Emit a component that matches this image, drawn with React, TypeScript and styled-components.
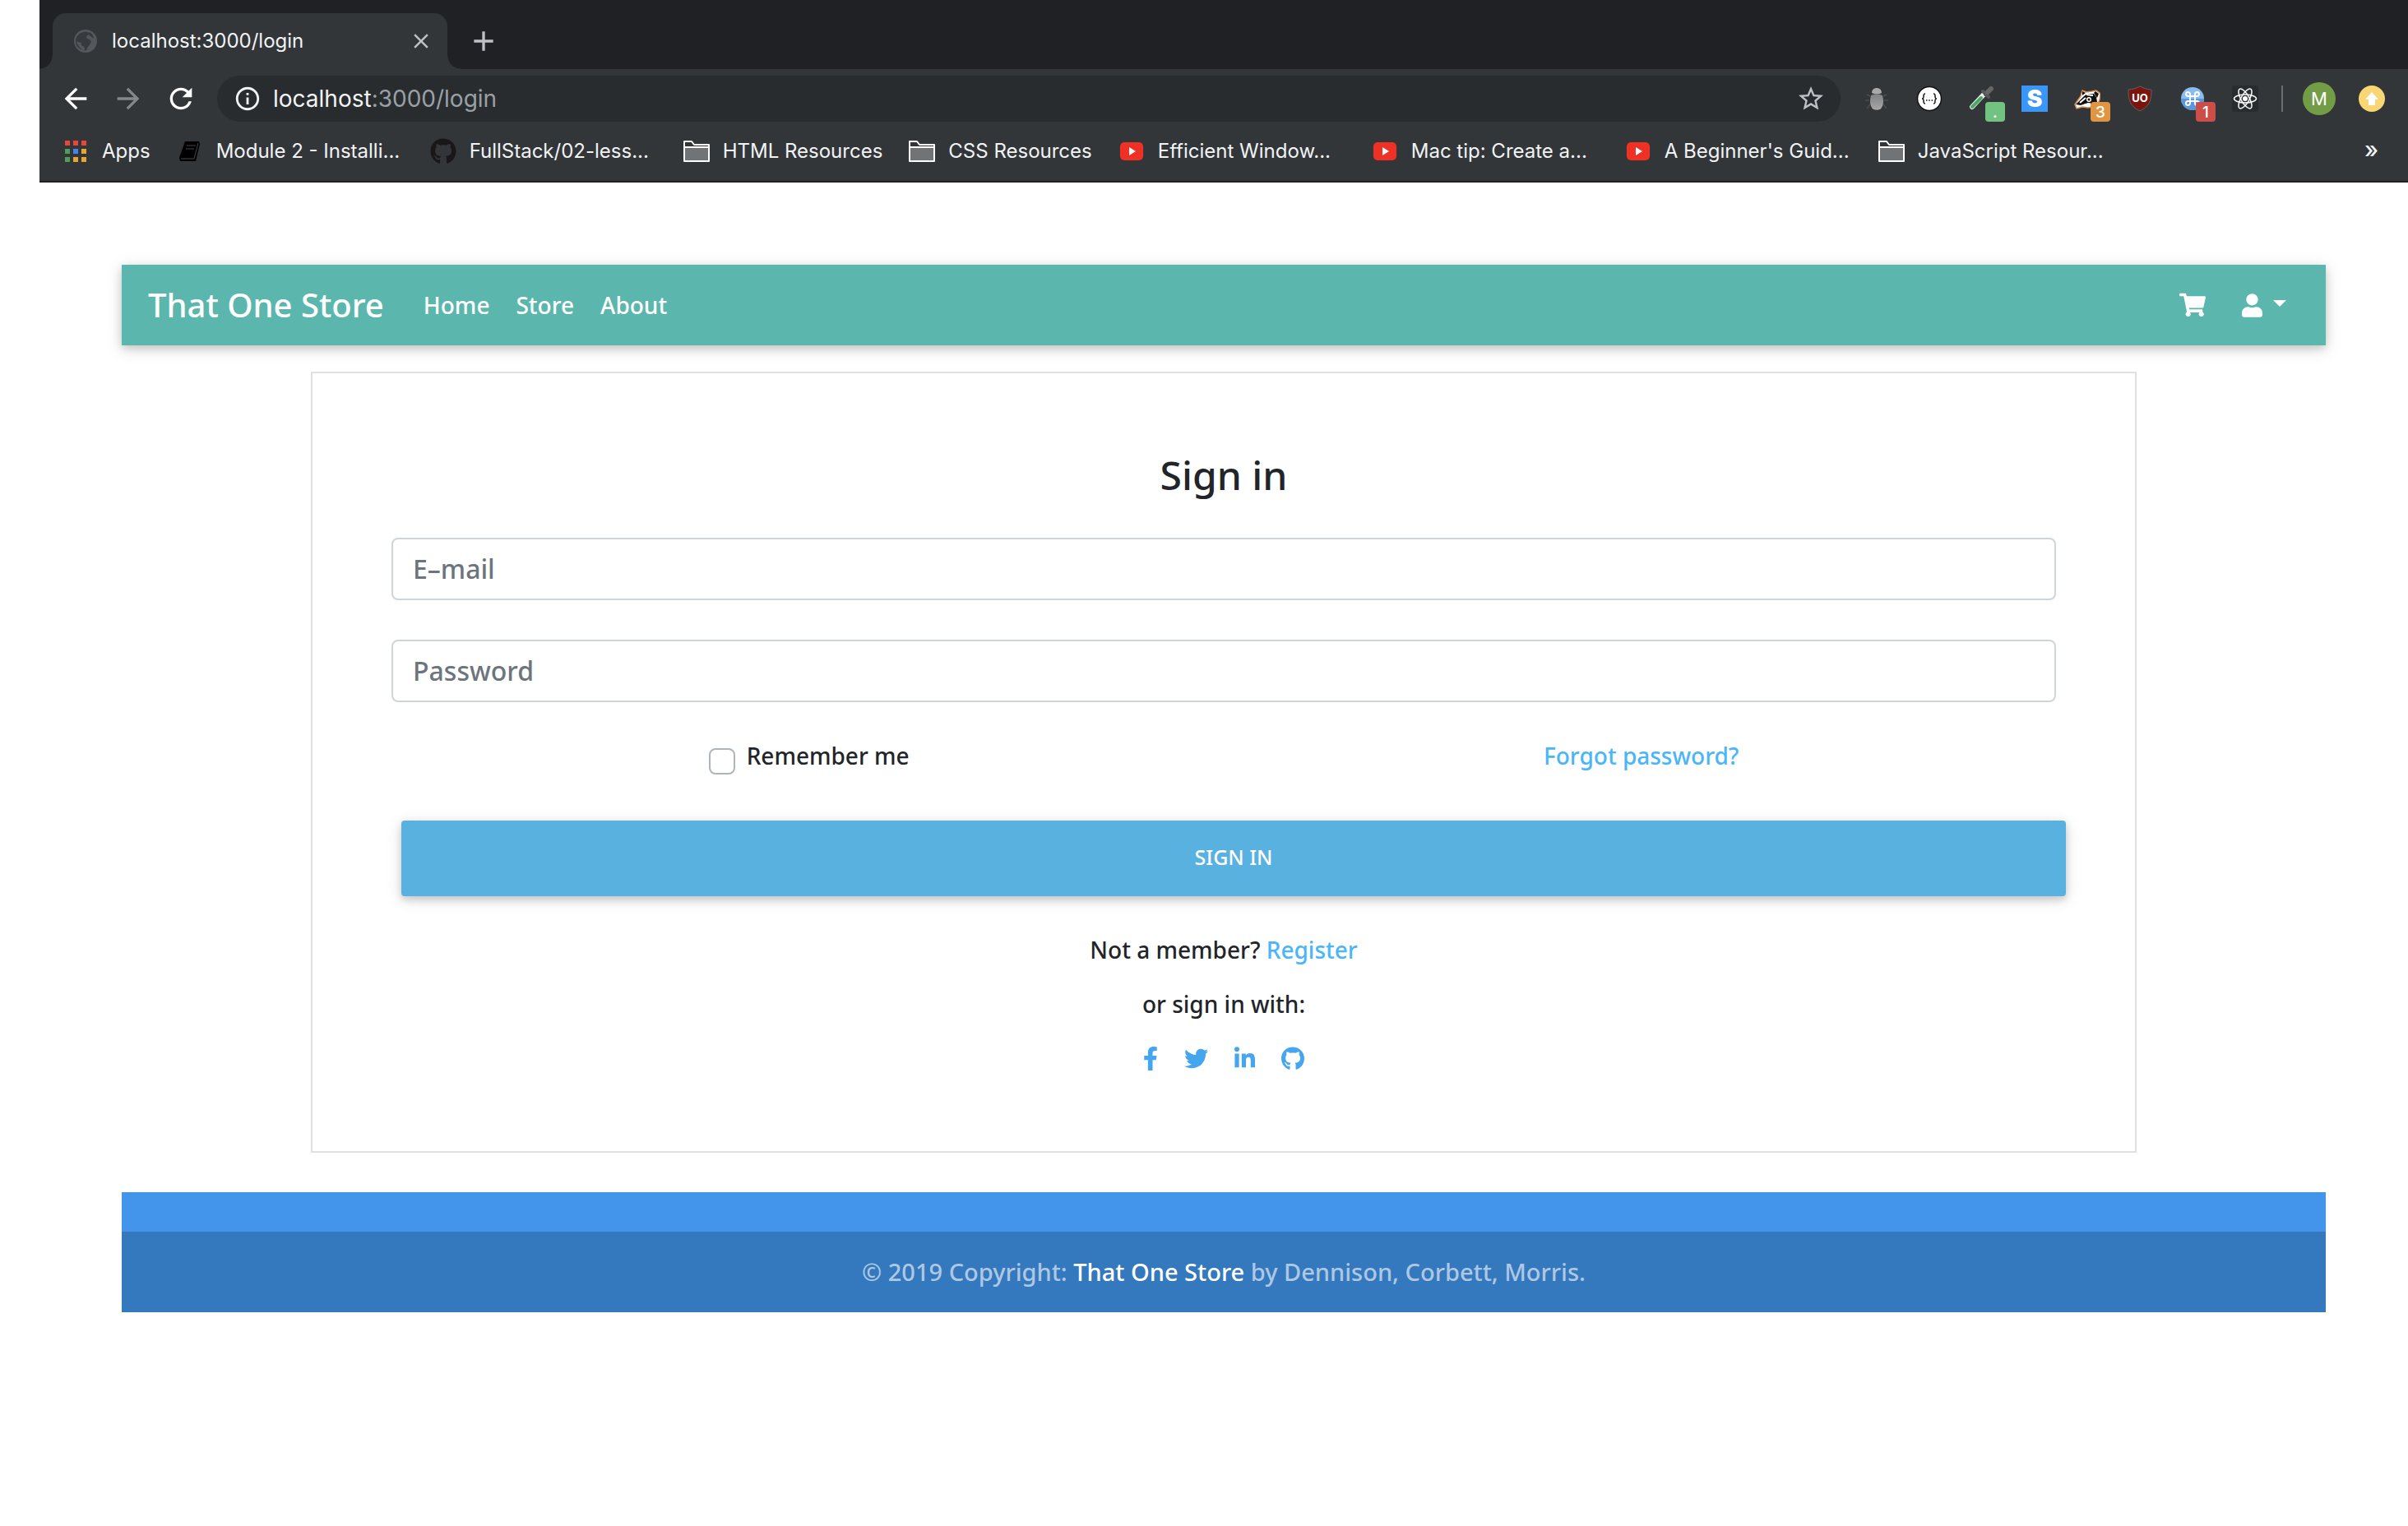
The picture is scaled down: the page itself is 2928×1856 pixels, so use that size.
import React from "react";
import styled, { createGlobalStyle } from "styled-components";
import {
  MdAdd,
  MdArrowBack,
  MdArrowForward,
  MdClose,
  MdInfoOutline,
  MdRefresh,
  MdStarBorder,
} from "react-icons/md";
import {
  FaFacebookF,
  FaGithub,
  FaLinkedinIn,
  FaShoppingCart,
  FaTwitter,
  FaUser,
} from "react-icons/fa";

const chromeFont = `Inter, Roboto, "Liberation Sans", sans-serif`;
const pageFont = `"Noto Sans", "Open Sans", "DejaVu Sans", sans-serif`;
const lift = "0 4px 10px rgba(0, 0, 0, 0.16), 0 4px 20px rgba(0, 0, 0, 0.12)";

const GlobalStyle = createGlobalStyle`
  *, *::before, *::after { box-sizing: border-box; }
  body { margin: 0; background: #fff; }
  button { border: 0; padding: 0; background: none; color: inherit; font: inherit; cursor: pointer; }
  a { color: inherit; text-decoration: none; }
  svg { display: block; flex: none; }
`;

/* ---------- browser window ---------- */

const Window = styled.div`
  margin-left: 48px;
`;

const Chrome = styled.header`
  background: #323639;
  border-bottom: 2px solid #202124;
  color: #f1f3f4;
  font-family: ${chromeFont};
`;

const TabStrip = styled.div`
  display: flex;
  align-items: flex-end;
  background: #202124;
  padding-top: 16px;
`;

const Flare = styled.span<{ $side: "left" | "right" }>`
  width: 16px;
  height: 16px;
  background: radial-gradient(
    circle at ${(p) => (p.$side === "left" ? "0 0" : "100% 0")},
    #202124 15px,
    #323639 16px
  );
`;

const Tab = styled.div`
  display: flex;
  align-items: center;
  width: 480px;
  height: 68px;
  padding: 0 17px 0 24px;
  border-radius: 16px 16px 0 0;
  background: #323639;
`;

const TabTitle = styled.span`
  flex: 1;
  padding-left: 16px;
  font-size: 24px;
  line-height: 32px;
`;

const StripButton = styled.button`
  display: flex;
  color: #bdc1c6;
`;

const NewTab = styled(StripButton)`
  align-self: center;
  margin-left: 8px;
`;

const Toolbar = styled.div`
  display: flex;
  align-items: center;
  padding: 8px 28px 0 24px;
`;

const NavButtons = styled.div`
  display: flex;
  gap: 24px;
  margin-right: 24px;
`;

const NavButton = styled.button<{ $dim?: boolean }>`
  display: flex;
  color: ${(p) => (p.$dim ? "#85888a" : "#fff")};
`;

const AddressBar = styled.div`
  display: flex;
  flex: 1;
  align-items: center;
  gap: 14px;
  height: 56px;
  padding: 0 18px 0 20px;
  border-radius: 28px;
  background: #282c2f;
`;

const Address = styled.span`
  flex: 1;
  color: #9aa0a6;
  font-size: 28px;
  line-height: 36px;
`;

const Host = styled.span`
  color: #f1f3f4;
`;

const Extensions = styled.div`
  display: flex;
  gap: 32px;
  margin: 0 28px;
`;

const Extension = styled.button`
  position: relative;
  display: flex;
  width: 32px;
  height: 32px;
`;

const Badge = styled.span<{ $color: string }>`
  position: absolute;
  right: -12px;
  bottom: -12px;
  width: 24px;
  height: 24px;
  border-radius: 4px;
  background: ${(p) => p.$color};
  color: #fff;
  font-size: 19px;
  font-weight: 500;
  line-height: 26px;
  text-align: center;
`;

const Divider = styled.span`
  width: 2px;
  height: 32px;
  background: #6b6e71;
`;

const Avatar = styled.button`
  width: 40px;
  height: 40px;
  margin: 0 28px 0 24px;
  border-radius: 50%;
  background: #739c47;
  color: #fff;
  font-size: 22px;
  line-height: 40px;
  text-align: center;
`;

const Bookmarks = styled.nav`
  display: flex;
  align-items: center;
  gap: 32px;
  height: 72px;
  padding: 0 36px 0 28px;
  font-size: 24px;
  line-height: 32px;
`;

const Bookmark = styled.a<{ $capped?: boolean }>`
  display: flex;
  align-items: center;
  gap: 16px;
  width: ${(p) => (p.$capped ? "276px" : "auto")};
  white-space: nowrap;
`;

const MoreBookmarks = styled.button`
  margin-left: auto;
  padding-bottom: 4px;
  font-size: 28px;
  font-weight: 500;
`;

/* ---------- page ---------- */

const Page = styled.div`
  padding: 100px;
  color: #212529;
  font-family: ${pageFont};
  font-size: 28px;
  font-weight: 500;
  line-height: 34px;
`;

const Navbar = styled.nav`
  display: flex;
  align-items: center;
  padding: 20px 48px 20px 32px;
  background: #5bb7ad;
  box-shadow: ${lift};
  color: #fff;
`;

const Brand = styled.a`
  margin-right: 48px;
  font-size: 40px;
  line-height: 58px;
`;

const NavLinks = styled.div`
  display: flex;
  flex: 1;
  gap: 32px;
`;

const NavIcons = styled.div`
  display: flex;
  align-items: center;
  gap: 44px;
`;

const GlyphBox = styled.span<{ $width: number }>`
  display: block;
  width: ${(p) => p.$width}px;

  svg {
    width: 100%;
    height: 29px;
  }
`;

const UserMenu = styled.button`
  display: flex;
  align-items: center;
  gap: 13px;
`;

const Caret = styled.span`
  margin-bottom: 4px;
  border-top: 8px solid #fff;
  border-right: 8px solid transparent;
  border-left: 8px solid transparent;
`;

const Card = styled.form`
  display: flex;
  flex-direction: column;
  gap: 48px;
  max-width: 2220px;
  margin: 32px auto 48px;
  padding: 96px;
  border: 2px solid #e0e0e0;
`;

const Title = styled.h1`
  margin: 0;
  font-size: 48px;
  font-weight: 500;
  line-height: 56px;
  text-align: center;
`;

const Field = styled.input`
  width: 100%;
  height: 76px;
  padding: 0 24px 2px;
  border: 2px solid #ced4da;
  border-radius: 8px;
  background: #fff;
  color: #495057;
  font-family: inherit;
  font-size: 32px;
  font-weight: 500;

  &::placeholder {
    color: #6c757d;
    opacity: 1;
  }
`;

const Options = styled.div`
  display: flex;
  justify-content: space-around;
  height: 48px;
`;

const Remember = styled.label`
  display: flex;
  gap: 14px;
`;

const Checkbox = styled.input`
  appearance: none;
  width: 32px;
  height: 32px;
  margin: 8px 0 0;
  border: 2px solid #adb5bd;
  border-radius: 8px;
  background: #fff;
`;

const Link = styled.a`
  color: #4bb5f9;
`;

const Submit = styled.button`
  height: 92px;
  margin: 0 -12px 0 12px;
  padding-bottom: 4px;
  border-radius: 4px;
  background: #59b1e0;
  box-shadow: ${lift};
  color: #fff;
  font-size: 25px;
  text-transform: uppercase;
`;

const Alternatives = styled.div`
  display: flex;
  flex-direction: column;
  align-items: center;
  gap: 32px;
`;

const Line = styled.p`
  margin: 0;
`;

const Social = styled.div`
  display: flex;
  align-items: center;
  gap: 32px;
  height: 34px;
  color: #45a5ee;
`;

const Footer = styled.footer`
  padding-top: 48px;
  background: #4395ec;
`;

const Copyright = styled.div`
  padding: 32px;
  background: #3478bd;
  color: rgba(255, 255, 255, 0.6);
  font-size: 29px;
  text-align: center;

  a {
    color: #fff;
  }
`;

/* ---------- drawings ---------- */

const GlobeIcon = () => (
  <svg width="32" height="32" viewBox="0 0 32 32">
    <circle cx="16" cy="16" r="14" fill="#54585c" />
    <path
      d="M14 5c3-1 6 0 6 2s-3 2-3 4 2 2 4 3 2 3 1 5-3 3-4 6c0 2-2 3-4 2 2-2 1-4-1-5-2 0-3-2-2-4-2 0-4-1-6-2 1 5 4 8 7 10C6 25 4 20 4 16 4 10 8 6 14 5Z"
      fill="#36393d"
    />
    <path d="M21 5c-2 2-1 4 1 5l4 3c0-3-2-6-5-8Z" fill="#36393d" />
  </svg>
);

const AppsIcon = () => {
  const colors = [
    "#e8453c", "#e8453c", "#e8453c",
    "#4f9d5d", "#3f86f4", "#e9a432",
    "#4f9d5d", "#e9a432", "#e9a432",
  ];
  return (
    <svg width="32" height="32" viewBox="0 0 32 32">
      {colors.map((color, i) => (
        <rect
          key={i}
          x={3 + (i % 3) * 10}
          y={3 + Math.floor(i / 3) * 10}
          width="6"
          height="6"
          fill={color}
        />
      ))}
    </svg>
  );
};

const BookIcon = () => (
  <svg width="32" height="32" viewBox="0 0 32 32">
    <path d="M10 4h17l1 3-5 21H4l-1-4Z" fill="#000" />
    <path d="M12 9h11M11 13h10M5 25h16l5-19" stroke="#43474a" strokeWidth="1" fill="none" />
  </svg>
);

const FolderIcon = () => (
  <svg width="32" height="32" viewBox="0 0 32 32">
    <path d="M1 4h9l3 4h18v20H1Z" fill="#323639" stroke="#fff" strokeWidth="2" strokeLinejoin="round" />
    <path d="M2 12h28v15H2Z" fill="#717477" />
    <path d="M1 11h30" stroke="#fff" strokeWidth="2" />
  </svg>
);

const VideoIcon = () => (
  <svg width="32" height="32" viewBox="0 0 32 32">
    <rect x="2" y="5" width="28" height="22" rx="5" fill="#ee3124" />
    <path d="m13 11 8 5-8 5Z" fill="#fff" />
  </svg>
);

const BugIcon = () => (
  <svg width="32" height="32" viewBox="0 0 32 32">
    <defs>
      <linearGradient id="shell" x1="0" y1="0" x2="0" y2="1">
        <stop offset="0" stopColor="#828282" />
        <stop offset="1" stopColor="#a8a8a8" />
      </linearGradient>
    </defs>
    <path d="M8 13 4 11M7 18H2M8 23l-4 5M24 13l4-2M25 18h5M24 23l4 5" stroke="#4a4e51" strokeWidth="1.5" />
    <path d="M10 9c0-8 12-8 12 0-4 2-8 2-12 0Z" fill="#a9a9a9" />
    <path d="M9 12c4-2 10-2 14 0 2 8 1 14-3 17-3 1-5 1-8 0-4-3-5-9-3-17Z" fill="url(#shell)" />
  </svg>
);

const BracesIcon = () => (
  <svg width="32" height="32" viewBox="0 0 32 32">
    <circle cx="16" cy="16" r="14.5" fill="#fff" stroke="#111" strokeWidth="1.5" />
    <path
      d="M11 10c-2 0-2 1-2 3s0 3-2 3c2 0 2 1 2 3s0 3 2 3M21 10c2 0 2 1 2 3s0 3 2 3c-2 0-2 1-2 3s0 3-2 3"
      fill="none"
      stroke="#111"
      strokeWidth="1.5"
    />
    <path d="M12 18h1.5M15.300 18h1.5M18.600 18h1.5" stroke="#111" strokeWidth="1.5" />
  </svg>
);

const DropperIcon = () => (
  <svg width="32" height="32" viewBox="0 0 32 32">
    <path d="M4 26 19 10" stroke="#ececec" strokeWidth="6" strokeLinecap="round" />
    <path d="m4 26 11-11" stroke="#49a865" strokeWidth="4" strokeLinecap="round" />
    <path d="m17 7 7 7M20 11l6-7" stroke="#565656" strokeWidth="4" strokeLinecap="round" />
    <path d="m23 8 4-4" stroke="#666" strokeWidth="6" strokeLinecap="round" />
  </svg>
);

const LetterIcon = () => (
  <svg width="32" height="32" viewBox="0 0 32 32">
    <rect width="32" height="32" fill="#3b97f7" />
    <text x="16" y="26" textAnchor="middle" fontSize="28" fontWeight="900" fill="#fff">
      S
    </text>
  </svg>
);

const BadgerIcon = () => (
  <svg width="32" height="32" viewBox="0 0 32 32">
    <path
      d="M1 23 8 13l2-7 5 2 7-1 5-1 5 4-1 7-3 8-11 2-7-1-7 2Z"
      fill="#fff"
      stroke="#d98a4e"
      strokeWidth="1.5"
      strokeLinejoin="round"
    />
    <path d="M2 23 12 13l4-3 8 0 3 4 1 6-5 4-6-3-9 3ZM10 7l4 2-4 3Zm16 0 4 3-2 5-4-6Z" fill="#111" />
    <path d="m7 21 7-6M15 11l8 1M12 24l8-2" stroke="#fff" strokeWidth="2" />
    <circle cx="18" cy="17" r="3" fill="#fff" />
    <circle cx="18" cy="17" r="1.5" fill="#111" />
  </svg>
);

const ShieldIcon = () => (
  <svg width="32" height="32" viewBox="0 0 32 32">
    <path
      d="M16 1c4 2 9 4 14 4 0 13-2 20-14 26C4 25 2 18 2 5c5 0 10-2 14-4Z"
      fill="#7a140c"
      stroke="#5a6265"
      strokeWidth="1"
    />
    <text x="16" y="20" textAnchor="middle" fontSize="13" fontWeight="700" fill="#fff">
      UO
    </text>
  </svg>
);

const CommandIcon = () => (
  <svg width="32" height="32" viewBox="0 0 32 32">
    <circle cx="16" cy="16" r="14" fill="#8bbcf0" />
    <path d="M2 16h28a14 14 0 0 1-28 0Z" fill="#5b97da" />
    <path
      d="M13 13h6v6h-6ZM13 13h-2.500a2.500 2.500 0 1 1 2.500-2.500ZM19 13v-2.500a2.500 2.500 0 1 1 2.500 2.500ZM19 19h2.500a2.500 2.500 0 1 1-2.500 2.500ZM13 19v2.500a2.500 2.500 0 1 1-2.500-2.500Z"
      fill="none"
      stroke="#fff"
      strokeWidth="2"
    />
  </svg>
);

const AtomIcon = () => (
  <svg width="32" height="32" viewBox="0 0 32 32">
    <rect width="32" height="32" rx="3" fill="#282c2f" />
    <g fill="none" stroke="#fff" strokeWidth="1.500">
      <ellipse cx="16" cy="16" rx="13.500" ry="5" />
      <ellipse cx="16" cy="16" rx="13.500" ry="5" transform="rotate(60 16 16)" />
      <ellipse cx="16" cy="16" rx="13.500" ry="5" transform="rotate(120 16 16)" />
    </g>
    <circle cx="16" cy="16" r="3" fill="#fff" />
  </svg>
);

const UpdateIcon = () => (
  <svg width="32" height="32" viewBox="0 0 32 32">
    <circle cx="16" cy="16" r="16" fill="#f8d674" />
    <path d="m16 8 8 9h-4v7h-8v-7H8Z" fill="#fff" />
  </svg>
);

/* ---------- data ---------- */

const extensions = [
  { name: "Bug", icon: <BugIcon /> },
  { name: "JSON", icon: <BracesIcon /> },
  { name: "Color picker", icon: <DropperIcon />, badge: ".", color: "#72c381" },
  { name: "Stylus", icon: <LetterIcon /> },
  { name: "Privacy Badger", icon: <BadgerIcon />, badge: "3", color: "#e09543" },
  { name: "Shield", icon: <ShieldIcon /> },
  { name: "Commands", icon: <CommandIcon />, badge: "1", color: "#cb4e49" },
  { name: "React", icon: <AtomIcon /> },
];

const bookmarks = [
  { label: "Apps", icon: <AppsIcon /> },
  { label: "Module 2 - Installi...", icon: <BookIcon />, capped: true },
  { label: "FullStack/02-less...", icon: <FaGithub size={32} color="#191717" />, capped: true },
  { label: "HTML Resources", icon: <FolderIcon /> },
  { label: "CSS Resources", icon: <FolderIcon /> },
  { label: "Efficient Window...", icon: <VideoIcon />, capped: true },
  { label: "Mac tip: Create a...", icon: <VideoIcon />, capped: true },
  { label: "A Beginner's Guid...", icon: <VideoIcon />, capped: true },
  { label: "JavaScript Resour...", icon: <FolderIcon />, capped: true },
];

const navLinks = ["Home", "Store", "About"];

const socials = [
  { name: "Facebook", icon: <FaFacebookF />, width: 18 },
  { name: "Twitter", icon: <FaTwitter />, width: 29 },
  { name: "LinkedIn", icon: <FaLinkedinIn />, width: 25 },
  { name: "GitHub", icon: <FaGithub />, width: 28 },
];

export default function App() {
  return (
    <>
      <GlobalStyle />
      <Window>
        <Chrome>
          <TabStrip>
            <Flare $side="left" />
            <Tab>
              <GlobeIcon />
              <TabTitle>localhost:3000/login</TabTitle>
              <StripButton aria-label="Close tab">
                <MdClose size={30} />
              </StripButton>
            </Tab>
            <Flare $side="right" />
            <NewTab aria-label="New tab">
              <MdAdd size={40} />
            </NewTab>
          </TabStrip>
          <Toolbar>
            <NavButtons>
              <NavButton aria-label="Back">
                <MdArrowBack size={40} />
              </NavButton>
              <NavButton aria-label="Forward" $dim>
                <MdArrowForward size={40} />
              </NavButton>
              <NavButton aria-label="Reload">
                <MdRefresh size={40} />
              </NavButton>
            </NavButtons>
            <AddressBar>
              <MdInfoOutline size={34} />
              <Address>
                <Host>localhost</Host>:3000/login
              </Address>
              <StripButton aria-label="Bookmark this page">
                <MdStarBorder size={36} />
              </StripButton>
            </AddressBar>
            <Extensions>
              {extensions.map((item) => (
                <Extension key={item.name} aria-label={item.name}>
                  {item.icon}
                  {item.badge && <Badge $color={item.color}>{item.badge}</Badge>}
                </Extension>
              ))}
            </Extensions>
            <Divider />
            <Avatar aria-label="Profile">M</Avatar>
            <StripButton aria-label="Update">
              <UpdateIcon />
            </StripButton>
          </Toolbar>
          <Bookmarks>
            {bookmarks.map((item) => (
              <Bookmark key={item.label} href="#" $capped={item.capped}>
                {item.icon}
                {item.label}
              </Bookmark>
            ))}
            <MoreBookmarks aria-label="More bookmarks">»</MoreBookmarks>
          </Bookmarks>
        </Chrome>

        <Page>
          <Navbar>
            <Brand href="#">That One Store</Brand>
            <NavLinks>
              {navLinks.map((label) => (
                <a key={label} href="#">
                  {label}
                </a>
              ))}
            </NavLinks>
            <NavIcons>
              <a href="#" aria-label="Cart">
                <FaShoppingCart size={32} />
              </a>
              <UserMenu aria-label="Account">
                <GlyphBox $width={25}>
                  <FaUser />
                </GlyphBox>
                <Caret />
              </UserMenu>
            </NavIcons>
          </Navbar>

          <Card onSubmit={(event) => event.preventDefault()}>
            <Title>Sign in</Title>
            <Field type="email" placeholder="E–mail" aria-label="E-mail" />
            <Field type="password" placeholder="Password" aria-label="Password" />
            <Options>
              <Remember>
                <Checkbox type="checkbox" />
                Remember me
              </Remember>
              <Link href="#">Forgot password?</Link>
            </Options>
            <Submit type="submit">Sign in</Submit>
            <Alternatives>
              <Line>
                Not a member? <Link href="#">Register</Link>
              </Line>
              <Line>or sign in with:</Line>
              <Social>
                {socials.map((item) => (
                  <a key={item.name} href="#" aria-label={item.name}>
                    <GlyphBox $width={item.width}>{item.icon}</GlyphBox>
                  </a>
                ))}
              </Social>
            </Alternatives>
          </Card>

          <Footer>
            <Copyright>
              © 2019 Copyright: <a href="#">That One Store</a> by Dennison, Corbett, Morris.
            </Copyright>
          </Footer>
        </Page>
      </Window>
    </>
  );
}
